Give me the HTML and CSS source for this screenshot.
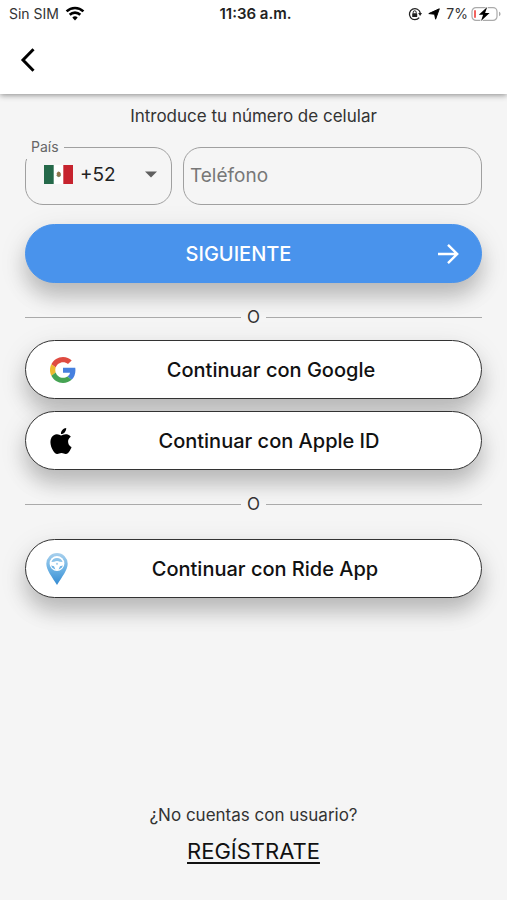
FILE: index.html
```html
<!DOCTYPE html>
<html lang="es">
<head>
    <meta charset="utf-8" />
    <meta name="viewport" content="width=device-width, initial-scale=1" />
    <title>Ride App - Iniciar sesión</title>
    <link rel="stylesheet" href="styles.css">
</head>
<body>
    <header class="app-header">
        <div class="status-bar">
            <div class="status-left">
                <span>Sin SIM</span>
                <svg width="20" height="15" viewBox="0 0 20 15" fill="none" stroke="#000" stroke-width="2.6">
                    <path d="M1.6 5.4a12 12 0 0 1 16.8 0" />
                    <path d="M4.7 8.8a7.6 7.6 0 0 1 10.6 0" />
                    <path d="M10 14.4l-2.7-2.8a3.9 3.9 0 0 1 5.4 0z" fill="#000" stroke="none" />
                </svg>
            </div>
            <span class="status-time">11:36 a.m.</span>
            <div class="status-right">
                <svg width="14" height="14" viewBox="0 0 14 14" fill="none" stroke="#222">
                    <path d="M11.2 10.6A5.5 5.5 0 1 1 12.3 6" stroke-width="1.3" />
                    <path d="M10.2 6h3.8l-1.9 3z" fill="#222" stroke="none" />
                    <rect x="4.2" y="6.3" width="5" height="3.8" rx=".6" fill="#222" stroke="none" />
                    <path d="M5.2 6.5V5.3a1.5 1.5 0 0 1 3 0v1.2" stroke-width="1" />
                </svg>
                <svg width="12" height="12" viewBox="0 0 12 12">
                    <path d="M11.3.8L7.6 11.2 6.6 6.2.8 5.6z" fill="#000" stroke="#000" stroke-linejoin="round" />
                </svg>
                <span class="battery">
                    7%
                    <svg width="31" height="16" viewBox="0 0 31 16">
                        <rect x="1" y="1.6" width="25" height="12.8" rx="4" fill="#fff" stroke="#aaa" stroke-width="1.2" />
                        <rect x="3" y="4" width="2" height="8" rx="1" fill="#f2635f" />
                        <path d="M28 5.8c2 .6 2 3.8 0 4.400z" fill="#aaa" />
                        <path d="M16.200 1L7.800 8.800h4.300L10 15l8.600-8h-4.500z" fill="#000" stroke="#fff" stroke-width="1.600" paint-order="stroke" />
                    </svg>
                </span>
            </div>
        </div>
        <button class="back-button" type="button" aria-label="Regresar">
            <svg width="16" height="26" viewBox="0 0 16 26" fill="none" stroke="#000" stroke-width="3">
                <path d="M13.5 2.3L3 13l10.5 10.7" />
            </svg>
        </button>
    </header>

    <main class="login">
        <form class="login-form">
            <h1 class="login-title">Introduce tu número de celular</h1>

            <div class="phone-row">
                <div class="country-field">
                    <label class="country-label" for="country">País</label>
                    <svg class="flag" width="29" height="19" viewBox="0 0 29 19">
                        <path d="M0 0h29v19H0z" fill="#fff" />
                        <path d="M0 0h9.7v19H0z" fill="#25694a" />
                        <path d="M19.3 0H29v19h-9.7z" fill="#c6232e" />
                        <path d="M12.6 8.2l1.5-1.7 1.8.4 1.1 2-.8 2.3-1.5.8-1.6-1z" fill="#91734b" />
                        <path d="M12.4 10.4q2.2 2.5 4.5 0" fill="none" stroke="#71805b" stroke-width=".8" />
                    </svg>
                    <select id="country" class="country-select">
                        <option selected>+52</option>
                    </select>
                    <svg class="caret" width="12" height="7" viewBox="0 0 12 7">
                        <path d="M0 .5h12L6 6.5z" fill="#5f5f5f" />
                    </svg>
                </div>
                <input class="phone-input" type="tel" placeholder="Teléfono" aria-label="Teléfono">
            </div>

            <button class="button button-primary" type="submit">
                <span class="button-text">SIGUIENTE</span>
                <svg width="24" height="24" viewBox="0 0 24 24" fill="none" stroke="#fff" stroke-width="2.4">
                    <path d="M2 12h19M12 2.8l9.2 9.2-9.2 9.2" />
                </svg>
            </button>
        </form>

        <div class="divider">O</div>

        <div class="providers">
            <button class="button" type="button">
                <span class="icon icon-google">
                    <svg width="26" height="26" viewBox="0 0 48 48">
                        <path fill="#df4b41" d="M24 9.5c3.54 0 6.71 1.22 9.21 3.6l6.85-6.85C35.9 2.38 30.47 0 24 0 14.62 0 6.51 5.38 2.56 13.22l7.98 6.19C12.43 13.72 17.74 9.5 24 9.5z" />
                        <path fill="#4680df" d="M46.98 24.55c0-1.57-.15-3.09-.38-4.55H24v9.02h12.94c-.58 2.96-2.26 5.48-4.78 7.18l7.73 6c4.51-4.18 7.09-10.36 7.09-17.65z" />
                        <path fill="#edb92e" d="M10.53 28.59c-.48-1.45-.76-2.99-.76-4.59s.27-3.14.76-4.59l-7.98-6.19C.92 16.46 0 20.12 0 24s.92 7.54 2.56 10.78z" />
                        <path fill="#45a353" d="M24 48c6.48 0 11.93-2.13 15.89-5.81l-7.73-6c-2.15 1.45-4.92 2.3-8.16 2.3-6.26 0-11.57-4.22-13.47-9.91l-7.98 6.19C6.51 42.62 14.62 48 24 48z" />
                    </svg>
                </span>
                <span class="button-text">Continuar con Google</span>
            </button>
            <button class="button" type="button">
                <span class="icon icon-apple">
                    <svg width="22" height="26" viewBox="2 0 20 24">
                        <path d="M12.152 6.896c-.948 0-2.415-1.078-3.96-1.04-2.04.027-3.91 1.183-4.961 3.014-2.117 3.675-.546 9.103 1.519 12.09 1.013 1.454 2.208 3.09 3.792 3.039 1.52-.065 2.09-.987 3.935-.987 1.831 0 2.35.987 3.96.948 1.637-.026 2.676-1.48 3.676-2.948 1.156-1.688 1.636-3.325 1.662-3.415-.039-.013-3.182-1.221-3.22-4.857-.026-3.04 2.48-4.494 2.597-4.559-1.429-2.09-3.623-2.324-4.39-2.376-2-.156-3.675 1.09-4.61 1.09zM15.53 3.83c.843-1.012 1.4-2.427 1.245-3.83-1.207.052-2.662.805-3.532 1.818-.78.896-1.454 2.338-1.273 3.714 1.338.104 2.715-.688 3.559-1.701" />
                    </svg>
                </span>
                <span class="button-text">Continuar con Apple ID</span>
            </button>
        </div>

        <div class="divider divider-wide">O</div>

        <button class="button" type="button">
            <span class="icon icon-ride">
                <svg width="22" height="32" viewBox="0 0 22 32">
                    <defs>
                        <linearGradient id="pin" x1="0" y1="0" x2="0" y2="1">
                            <stop offset="0" stop-color="#a8d0ed" />
                            <stop offset=".5" stop-color="#6cb2e4" />
                            <stop offset="1" stop-color="#348bd2" />
                        </linearGradient>
                    </defs>
                    <path d="M11 0a10.7 10.7 0 0 1 10.7 10.8C21.7 17 16 24 11 32 6 24 .3 17 .3 10.8A10.7 10.7 0 0 1 11 0z" fill="url(#pin)" />
                    <circle cx="11" cy="10.5" r="7.4" fill="#fff" />
                    <path d="M5.4 9a5.9 5.9 0 0 1 11.2 0l-2.8-.2q-2.8-1.8-5.600 0z" fill="#8dc3e9" />
                    <path d="M5 12.400l3 .8 1.400 3.200Q6 15.600 5 12.400zM17 12.400l-3 .8-1.400 3.200q3.400-.8 4.400-4z" fill="#6cb2e4" />
                    <circle cx="11" cy="10.800" r="1.100" fill="#a8d0ed" />
                </svg>
            </span>
            <span class="button-text">Continuar con Ride App</span>
        </button>
    </main>

    <footer class="signup">
        <p class="signup-question">¿No cuentas con usuario?</p>
        <a class="signup-link" href="#">REGÍSTRATE</a>
    </footer>
</body>
</html>
```

FILE: styles.css
```css
* {
    box-sizing: border-box;
}

body {
    margin: 0;
    min-height: 100vh;
    display: flex;
    flex-direction: column;
    font-family: Inter, 'Helvetica Neue', sans-serif;
    background: #f5f5f5;
    color: #333;
}

button,
input,
select {
    font-family: inherit;
}

svg {
    flex-shrink: 0;
}

/* Header */
.app-header {
    height: 94px;
    background: white;
    box-shadow: 0 1px 6px rgba(0, 0, 0, 0.45);
}

.status-bar {
    display: grid;
    grid-template-columns: 1fr auto 1fr;
    align-items: center;
    height: 27px;
    padding: 0 5px 0 9px;
    font-size: 14px;
}

.status-left,
.status-right {
    display: flex;
    align-items: center;
    gap: 6px;
}

.status-right {
    justify-content: flex-end;
}

.status-time {
    color: #222;
    font-size: 15px;
    font-weight: 600;
}

.battery {
    display: flex;
    align-items: center;
    gap: 3px;
}

.back-button {
    display: flex;
    margin-left: 12px;
    padding: 20px 8px;
    background: none;
    border: none;
    cursor: pointer;
}

/* Login */
.login {
    padding: 12px 25px 0;
}

.login-title {
    margin: 0 0 21px;
    font-size: 17px;
    font-weight: 400;
    line-height: 20px;
    text-align: center;
}

.phone-row {
    display: flex;
    gap: 11px;
    margin-bottom: 19px;
}

.country-field {
    position: relative;
    flex: 0 0 147px;
    height: 58px;
    display: flex;
    align-items: center;
    padding: 0 14px 3px 18px;
    border: 1px solid #a0a0a0;
    border-radius: 18px;
}

.country-label {
    position: absolute;
    top: -10px;
    left: -1px;
    padding: 0 5px 3px 6px;
    background: #f5f5f5;
    color: #666;
    font-size: 14px;
    line-height: 18px;
}

.country-select {
    flex: 1;
    min-width: 0;
    padding: 0 0 0 7px;
    appearance: none;
    background: none;
    border: none;
    color: #222;
    font-size: 19px;
}

.phone-input {
    flex: 1;
    min-width: 0;
    height: 58px;
    padding: 0 6px 2px;
    background: none;
    border: 1px solid #a0a0a0;
    border-radius: 18px;
    font-size: 19px;
}

.phone-input::placeholder {
    color: #777;
}

.button {
    display: flex;
    align-items: center;
    gap: 4px;
    width: 100%;
    height: 59px;
    padding: 0 24px 0 19px;
    background: white;
    border: 1px solid #333;
    border-radius: 30px;
    box-shadow: 0 14px 20px rgba(0, 0, 0, 0.18), 0 8px 30px rgba(0, 0, 0, 0.1);
    color: #111;
    font-size: 20px;
    font-weight: 500;
    cursor: pointer;
}

.button-primary {
    padding: 0 21px 0 19px;
    background: #4993ec;
    border-color: #4993ec;
    color: white;
}

.button-text {
    flex: 1;
    text-align: center;
}

.icon {
    display: flex;
    justify-content: center;
}

.icon-google {
    width: 36px;
}

.icon-apple {
    width: 32px;
}

.icon-ride {
    width: 24px;
}

.providers {
    display: flex;
    flex-direction: column;
    gap: 12px;
}

.divider {
    display: flex;
    align-items: center;
    gap: 6px;
    margin: 24px 0 13px;
    font-size: 17px;
    line-height: 20px;
}

.divider-wide {
    margin: 24px 0 25px;
}

.divider::before,
.divider::after {
    content: "";
    flex: 1;
    height: 1px;
    background: #aaa;
}

/* Sign up */
.signup {
    margin-top: auto;
    padding-bottom: 35px;
    text-align: center;
}

.signup-question {
    margin: 0 0 12px;
    font-size: 17px;
    line-height: 20px;
}

.signup-link {
    color: #111;
    font-size: 22px;
    line-height: 28px;
    text-decoration-thickness: 2px;
    text-underline-offset: 3px;
}
```
